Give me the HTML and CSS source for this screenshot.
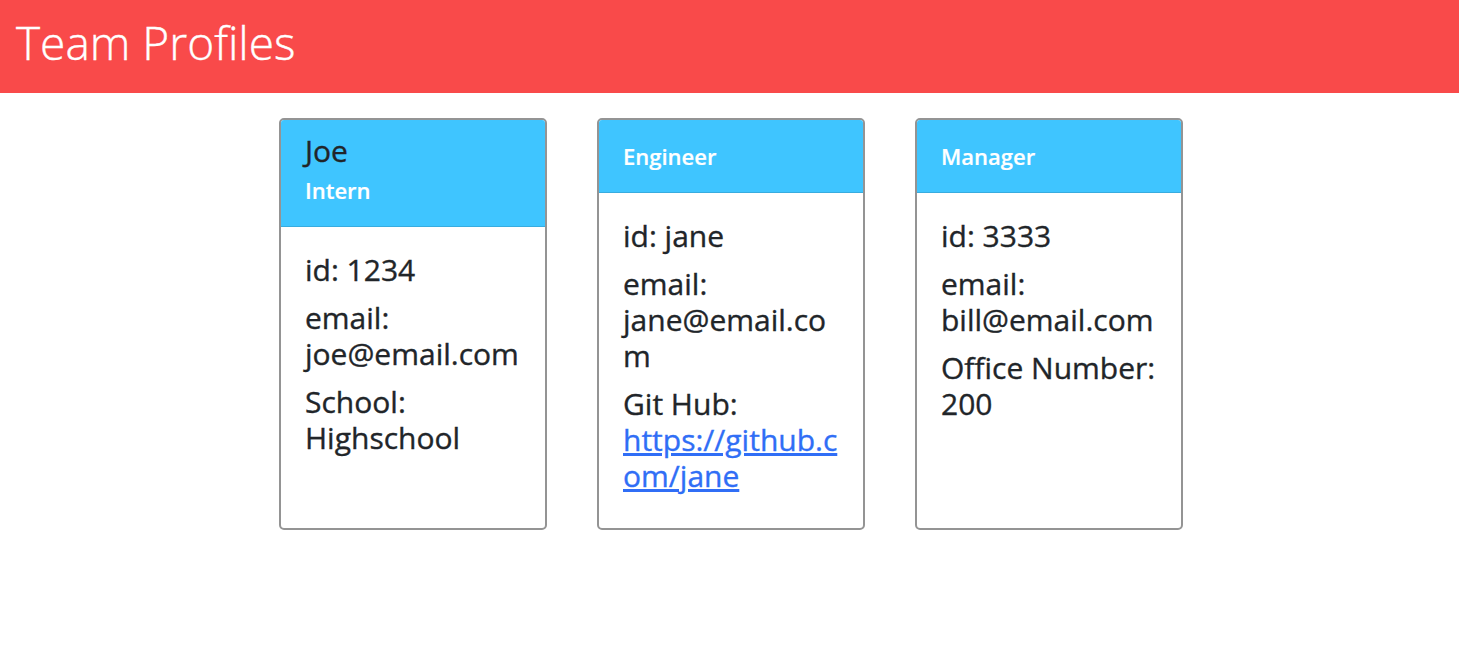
FILE: index.html
```html
<!DOCTYPE html>
<html lang="en">
<head>
<meta charset="utf-8">
<title>Team Profiles</title>
<link rel="stylesheet" href="styles.css">
</head>
<body>
<header class="banner">
  <h1 class="banner-title">Team Profiles</h1>
</header>
<main class="team">
  <section class="card">
    <div class="card-header">
      <h2 class="card-name">Joe</h2>
      <h3 class="card-role">Intern</h3>
    </div>
    <div class="card-body">
      <p class="card-line">id: 1234</p>
      <p class="card-line">email: joe@email.com</p>
      <p class="card-line">School: Highschool</p>
    </div>
  </section>
  <section class="card">
    <div class="card-header">
      <h3 class="card-role">Engineer</h3>
    </div>
    <div class="card-body">
      <p class="card-line">id: jane</p>
      <p class="card-line">email: jane@email.com</p>
      <p class="card-line">Git Hub: <a class="card-link" href="#">https://github.com/jane</a></p>
    </div>
  </section>
  <section class="card">
    <div class="card-header">
      <h3 class="card-role">Manager</h3>
    </div>
    <div class="card-body">
      <p class="card-line">id: 3333</p>
      <p class="card-line">email: bill@email.com</p>
      <p class="card-line">Office Number: 200</p>
    </div>
  </section>
</main>
</body>
</html>
```
FILE: styles.css
```css
* { box-sizing: border-box; }

body {
  margin: 0;
  font-family: "Open Sans", "Noto Sans", "Liberation Sans", sans-serif;
  color: #212529;
  background: #ffffff;
}

.banner {
  background: #f94a4a;
  height: 93px;
  padding: 0 16px 7px;
  display: flex;
  align-items: center;
}

.banner-title {
  margin: 0;
  color: #ffffff;
  font-size: 46px;
  font-weight: 300;
  line-height: 1.2;
  -webkit-text-stroke: 0.4px #ffffff;
}

.team {
  display: flex;
  justify-content: center;
  align-items: stretch;
  gap: 50px;
  padding: 25px 0 0 3px;
}

.card {
  width: 268px;
  border: 2px solid #949494;
  border-radius: 5px;
  overflow: hidden;
  display: flex;
  flex-direction: column;
}

.card-header {
  background: #3fc5ff;
  border-bottom: 1px solid #38acdf;
  padding: 24px;
}

.card-name {
  margin: -11px 0 9px;
  font-size: 30px;
  font-weight: 500;
  line-height: 36px;
  -webkit-text-stroke: 0.35px #212529;
}

.card-role {
  margin: 0;
  color: #ffffff;
  font-size: 22px;
  font-weight: 600;
  line-height: 24px;
  -webkit-text-stroke: 0.2px #ffffff;
}

.card-body {
  padding: 25px 24px 22px;
}

.card-line {
  margin: 0 0 12px;
  font-size: 30px;
  font-weight: 500;
  line-height: 36px;
  overflow-wrap: break-word;
  -webkit-text-stroke: 0.35px #212529;
}

.card-link {
  color: #306ef6;
  text-decoration: underline;
  -webkit-text-stroke: 0.35px #306ef6;
}
```
